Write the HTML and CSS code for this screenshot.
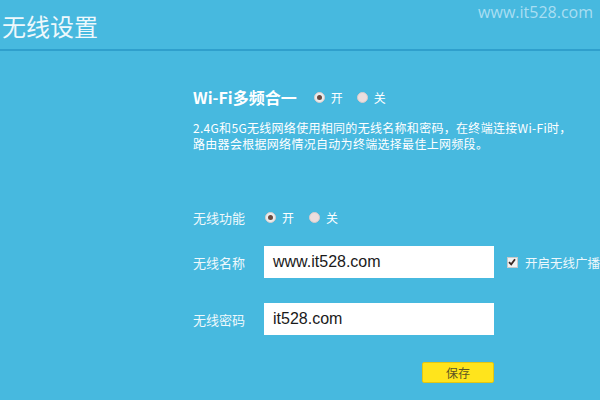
FILE: index.html
```html
<!DOCTYPE html>
<html lang="zh-CN">

<head>
    <meta charset="utf-8">
    <meta name="viewport" content="width=device-width, initial-scale=1.0">
    <title>无线设置</title>
    <link rel="stylesheet" href="styles.css">
</head>

<body>

    <div class="topbar">
        <h1>无线设置</h1>
        <div class="mark">www.it528.com</div>
    </div>

    <div class="panel">
        <div class="band">
            <h2>Wi-Fi多频合一</h2>
            <span class="opt"><span class="radio on"></span>开</span>
            <span class="opt"><span class="radio"></span>关</span>
        </div>

        <p class="desc">2.4G和5G无线网络使用相同的无线名称和密码，在终端连接Wi-Fi时，<br>路由器会根据网络情况自动为终端选择最佳上网频段。</p>

        <div class="row switch">
            <label>无线功能</label>
            <span class="opt"><span class="radio on"></span>开</span>
            <span class="opt"><span class="radio"></span>关</span>
        </div>

        <div class="row ssid">
            <label>无线名称</label>
            <div class="field">www.it528.com</div>
            <span class="check">
                <span class="box">
                    <svg width="8" height="8" viewBox="0 0 8 8"><path d="M1 4.2 L3.2 6.4 L7 1.2" fill="none" stroke="#3a2a26" stroke-width="1.8"/></svg>
                </span>
                开启无线广播
            </span>
        </div>

        <div class="row pwd">
            <label>无线密码</label>
            <div class="field">it528.com</div>
        </div>

        <div class="row actions">
            <button class="save">保存</button>
        </div>
    </div>

</body>

</html>
```

FILE: styles.css
```css
*,
body * {
    box-sizing: border-box;
}

body {
    margin: 0;
    padding: 0;
    width: 600px;
    height: 400px;
    overflow: hidden;
    background-color: #47b9df;
    color: #f4fbfe;
    font-family: "Liberation Sans", "Noto Sans CJK SC", sans-serif;
}

.topbar {
    height: 51px;
    border-bottom: 2px solid #2f9fcc;
    display: flex;
    justify-content: space-between;
    align-items: flex-start;
}

.topbar h1 {
    margin: 12px 0 0 2px;
    font-family: "Noto Sans CJK SC", sans-serif;
    font-size: 24px;
    font-weight: normal;
    line-height: 28px;
    color: #eef8fc;
}

.mark {
    margin: 3px 7px 0 0;
    font-family: "Open Sans", "Liberation Sans", sans-serif;
    font-size: 16px;
    line-height: 18px;
    color: #a9def2;
}

.panel {
    padding-left: 193px;
}

.band {
    margin-top: 36px;
    height: 20px;
    display: flex;
    align-items: center;
}

.band h2 {
    margin: 0 17px 0 0;
    font-family: "Noto Sans CJK SC", sans-serif;
    font-size: 16px;
    font-weight: bold;
    line-height: 20px;
    color: #ffffff;
}

.opt {
    display: inline-flex;
    align-items: center;
    gap: 6px;
    margin-right: 14px;
    font-family: "Noto Sans CJK SC", sans-serif;
    font-size: 12px;
    color: #ffffff;
}

.radio {
    width: 11px;
    height: 11px;
    border-radius: 50%;
    background-color: #ecdede;
    border: 1px solid #d8cccc;
    display: inline-flex;
    align-items: center;
    justify-content: center;
}

.radio.on {
    background-color: #ececec;
}

.radio.on::after {
    content: "";
    width: 5px;
    height: 5px;
    border-radius: 50%;
    background-color: #6a4a40;
}

.desc {
    margin: 13px 0 0 0;
    font-family: "Noto Sans CJK SC", sans-serif;
    font-size: 12px;
    line-height: 16px;
    letter-spacing: 0.3px;
    color: #ffffff;
}

.row {
    display: flex;
    align-items: center;
}

.row label {
    width: 71px;
    font-family: "Noto Sans CJK SC", sans-serif;
    font-size: 13px;
    color: #eef8fc;
}

.switch {
    margin-top: 55px;
    height: 20px;
}

.switch .opt {
    margin-left: 1px;
    margin-right: 14px;
}

.ssid {
    margin-top: 19px;
}

.pwd {
    margin-top: 25px;
}

.field {
    width: 230px;
    height: 32px;
    background-color: #ffffff;
    color: #1a1a1a;
    font-family: "Liberation Sans", sans-serif;
    font-size: 16px;
    line-height: 32px;
    padding-left: 9px;
}

.check {
    margin-left: 13px;
    display: inline-flex;
    align-items: center;
    gap: 7px;
    white-space: nowrap;
    font-family: "Noto Sans CJK SC", sans-serif;
    font-size: 12.5px;
    color: #eef8fc;
}

.box {
    width: 11px;
    height: 11px;
    background-color: #f2f2f2;
    border: 1px solid #c9c9c9;
    display: inline-flex;
    align-items: center;
    justify-content: center;
}

.actions {
    margin-top: 27px;
    width: 301px;
    justify-content: flex-end;
}

.save {
    width: 72px;
    height: 21px;
    padding: 0;
    background-color: #ffe41c;
    border: 1px solid #e2c612;
    border-radius: 2px;
    font-family: "Noto Sans CJK SC", sans-serif;
    font-size: 12px;
    color: #5b5422;
}
```
